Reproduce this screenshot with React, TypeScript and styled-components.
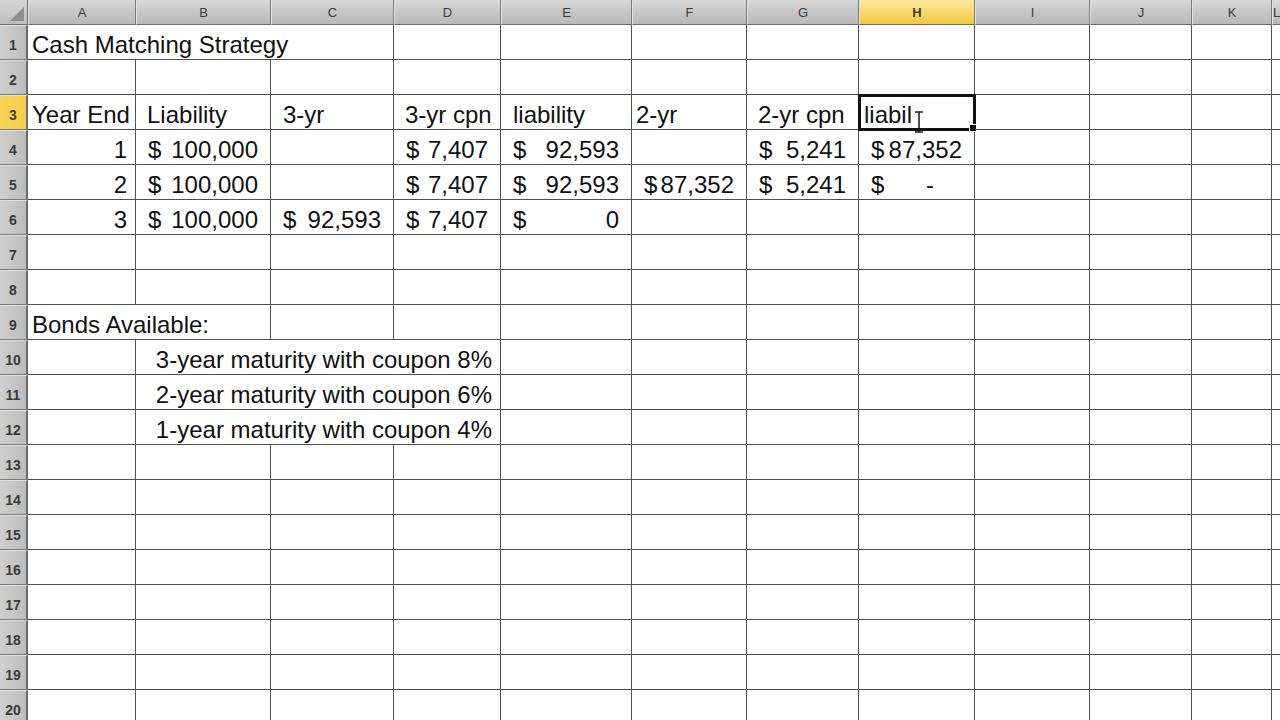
import React from 'react';
import styled, { createGlobalStyle, css } from 'styled-components';

const GlobalStyle = createGlobalStyle`
  html, body {
    margin: 0;
    padding: 0;
    background: #ffffff;
    overflow: hidden;
  }
  body {
    font-family: 'Liberation Sans', Arial, sans-serif;
  }
`;

const COLS = ['A', 'B', 'C', 'D', 'E', 'F', 'G', 'H', 'I', 'J', 'K', 'L'];
const WIDTHS = [108, 135, 123, 107, 131, 115, 112, 116, 115, 102, 80];

type CellDef = {
  span?: number;
  text?: string;
  align?: 'left' | 'right';
  indent?: number;
  acct?: string;
  active?: boolean;
};

const empty = (n: number): CellDef[] => Array.from({ length: n }, () => ({}));

const acct = (value: string): CellDef => ({ acct: value });

const rows: CellDef[][] = [
  [{ span: 3, text: 'Cash Matching Strategy', indent: 4 }, ...empty(9)],
  empty(12),
  [
    { text: 'Year End', indent: 4 },
    { text: 'Liability', indent: 11 },
    { text: '3-yr', indent: 12 },
    { text: '3-yr cpn', indent: 11 },
    { text: 'liability', indent: 12 },
    { text: '2-yr', indent: 4 },
    { text: '2-yr cpn', indent: 11 },
    { text: 'liabil', indent: 5, active: true },
    ...empty(4),
  ],
  [
    { text: '1', align: 'right' },
    acct('100,000'),
    {},
    acct('7,407'),
    acct('92,593'),
    {},
    acct('5,241'),
    acct('87,352'),
    ...empty(4),
  ],
  [
    { text: '2', align: 'right' },
    acct('100,000'),
    {},
    acct('7,407'),
    acct('92,593'),
    acct('87,352'),
    acct('5,241'),
    acct('-'),
    ...empty(4),
  ],
  [
    { text: '3', align: 'right' },
    acct('100,000'),
    acct('92,593'),
    acct('7,407'),
    acct('0'),
    ...empty(7),
  ],
  empty(12),
  empty(12),
  [{ span: 2, text: 'Bonds Available:', indent: 4 }, ...empty(10)],
  [{}, { span: 3, text: '3-year maturity with coupon 8%', align: 'right' }, ...empty(8)],
  [{}, { span: 3, text: '2-year maturity with coupon 6%', align: 'right' }, ...empty(8)],
  [{}, { span: 3, text: '1-year maturity with coupon 4%', align: 'right' }, ...empty(8)],
  ...Array.from({ length: 8 }, () => empty(12)),
];

export default function App() {
  return (
    <>
      <GlobalStyle />
      <Sheet>
        <Corner>
          <CornerMark />
        </Corner>
        {COLS.map((c) => (
          <ColHeader key={c} $selected={c === 'H'}>
            {c}
          </ColHeader>
        ))}

        {rows.map((cells, r) => (
          <React.Fragment key={r}>
            <RowHeader $selected={r === 2}>{r + 1}</RowHeader>
            {cells.map((cell, i) => {
              if (cell.acct) {
                return (
                  <AcctCell key={i} $dash={cell.acct === '-'}>
                    <span>$</span>
                    <span>{cell.acct}</span>
                  </AcctCell>
                );
              }
              return (
                <Cell
                  key={i}
                  $span={cell.span || 1}
                  $align={cell.align || 'left'}
                  $indent={cell.indent ?? 4}
                  $active={!!cell.active}
                >
                  {cell.text}
                  {cell.active && (
                    <Caret viewBox="0 0 10 22" width="10" height="22">
                      <path d="M1 1h8M5 1v20M1 21h8" stroke="#222" strokeWidth="1.6" fill="none" />
                    </Caret>
                  )}
                  {cell.active && <FillHandle />}
                </Cell>
              );
            })}
          </React.Fragment>
        ))}
      </Sheet>
    </>
  );
}

const Sheet = styled.div`
  display: grid;
  grid-template-columns: 28px ${WIDTHS.map((w) => `${w}px`).join(' ')} 1fr;
  grid-template-rows: 25px;
  grid-auto-rows: 35px;
  width: 1280px;
  height: 720px;
  overflow: hidden;
`;

const headerBase = css`
  display: flex;
  align-items: center;
  justify-content: center;
  box-sizing: border-box;
  font-family: 'Liberation Sans', Arial, sans-serif;
  font-size: 13px;
  color: #3c3c3c;
`;

const Corner = styled.div`
  ${headerBase};
  position: relative;
  background: linear-gradient(#d6d6d6, #bdbdbd);
  border-right: 1px solid #6e6e6e;
  border-bottom: 1px solid #6e6e6e;
`;

const CornerMark = styled.div`
  position: absolute;
  right: 3px;
  bottom: 3px;
  width: 0;
  height: 0;
  border-left: 14px solid transparent;
  border-bottom: 14px solid #8d8d8d;
`;

const ColHeader = styled.div<{ $selected: boolean }>`
  ${headerBase};
  background: ${(p) =>
    p.$selected
      ? 'linear-gradient(#fbe9a0, #f7d766 55%, #f3c940)'
      : 'linear-gradient(#d9d9d9, #c6c6c6 50%, #b9b9b9)'};
  color: ${(p) => (p.$selected ? '#4a4020' : '#3c3c3c')};
  font-weight: ${(p) => (p.$selected ? 700 : 400)};
  border-right: 1px solid #7a7a7a;
  border-left: 1px solid #e4e4e4;
  border-bottom: 1px solid #6e6e6e;
`;

const RowHeader = styled.div<{ $selected: boolean }>`
  ${headerBase};
  padding-top: 5px;
  font-size: 14px;
  font-weight: 700;
  background: ${(p) =>
    p.$selected ? 'linear-gradient(90deg, #f8d45c, #f5cd4a)' : 'linear-gradient(90deg, #cfcfcf, #bdbdbd)'};
  color: ${(p) => (p.$selected ? '#4a4020' : '#3a3a3a')};
  border-right: 2px solid #6a6a6a;
  border-bottom: 1px solid #7a7a7a;
  border-top: 1px solid #e2e2e2;
`;

const cellBase = css`
  box-sizing: border-box;
  display: flex;
  align-items: flex-end;
  padding-bottom: 2px;
  border-right: 1px solid #505050;
  border-bottom: 1px solid #505050;
  font-family: 'Liberation Sans', Arial, sans-serif;
  font-size: 24px;
  line-height: 24px;
  color: #111111;
  white-space: nowrap;
  overflow: visible;
`;

const Cell = styled.div<{ $span: number; $align: 'left' | 'right'; $indent: number; $active: boolean }>`
  ${cellBase};
  position: relative;
  grid-column: span ${(p) => p.$span};
  justify-content: ${(p) => (p.$align === 'right' ? 'flex-end' : 'flex-start')};
  padding-left: ${(p) => (p.$align === 'right' ? 0 : p.$indent)}px;
  padding-right: ${(p) => (p.$align === 'right' ? 8 : 0)}px;
  ${(p) =>
    p.$active &&
    css`
      outline: 3px solid #111111;
      outline-offset: -2px;
    `}
`;

const AcctCell = styled.div<{ $dash: boolean }>`
  ${cellBase};
  justify-content: space-between;
  padding-left: 12px;
  padding-right: ${(p) => (p.$dash ? 40 : 12)}px;
`;

const Caret = styled.svg`
  margin-left: 2px;
  margin-bottom: -6px;
`;

const FillHandle = styled.div`
  position: absolute;
  right: -3px;
  bottom: -3px;
  width: 6px;
  height: 6px;
  background: #111111;
  border: 1px solid #ffffff;
`;
